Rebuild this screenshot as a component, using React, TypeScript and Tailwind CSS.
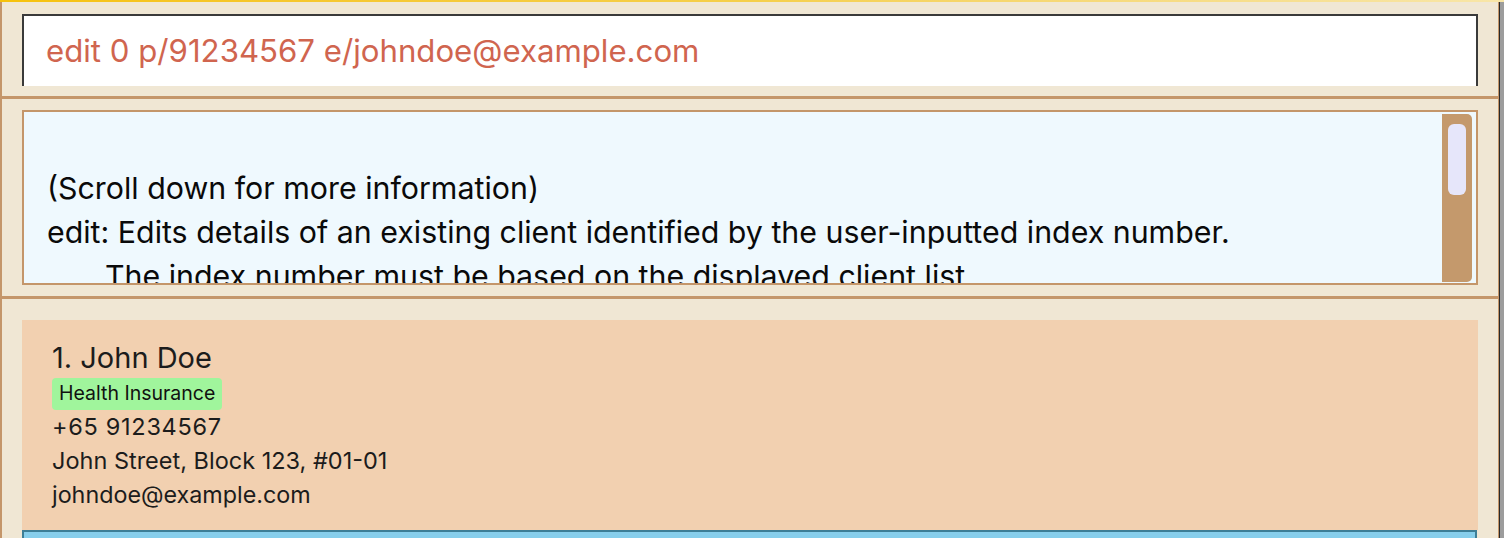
export default function App() {
  const font = { fontFamily: "Inter, 'Noto Sans', sans-serif" };

  return (
    <div className="w-[1504px] h-[538px] overflow-hidden flex flex-col bg-[#f0e7d4]" style={font}>
      {/* window title strip */}
      <div className="h-[2px] shrink-0 bg-gradient-to-r from-[#f6c20a] via-[#f5cf4a] to-[#f8e6a8]" />

      <div className="flex flex-1 min-h-0">
        <div className="w-[1499px] flex flex-col border-l-2 border-r border-[#c4966a] min-h-0">
          {/* command box */}
          <div className="h-[94px] shrink-0 px-[20px] pt-[12px] pb-[10px] flex">
            <div className="flex-1 bg-white border-t-2 border-x-2 border-[#3a3a3a] flex items-center pl-[22px]">
              <span className="text-[31.2px] text-[#d0654f]">edit 0 p/91234567 e/johndoe@example.com</span>
            </div>
          </div>

          <div className="h-[3px] shrink-0 bg-[#c4966a]" />

          {/* result display */}
          <div className="h-[197px] shrink-0 px-[20px] pt-[11px] pb-[11px] flex">
            <div className="flex-1 flex border-2 border-[#c4966a] bg-[#eff9fe] min-h-0">
              <div className="flex-1 overflow-hidden pt-[54px] pl-[23px] text-[30.35px] leading-[44px] text-[#0a0a0a] whitespace-pre">
                <div>(Scroll down for more information)</div>
                <div>edit: Edits details of an existing client identified by the user-inputted index number.</div>
                <div className="pl-[58px]">The index number must be based on the displayed client list.</div>
              </div>
              <div className="w-[30px] mt-[2px] mb-[1px] mr-[4px] bg-[#c4996c] rounded-r-[5px] pt-[10px] px-[6px]">
                <div className="h-[71px] bg-[#e6e6fa] rounded-[6px]" />
              </div>
            </div>
          </div>

          <div className="h-[3px] shrink-0 bg-[#c4966a]" />

          {/* client list */}
          <div className="flex-1 min-h-0 px-[20px] pt-[21px] flex flex-col">
            <div className="h-[210px] shrink-0 bg-[#f2d0b0] pl-[30px] pt-[18px] text-[#1c1c1c]">
              <div className="text-[29px] leading-[40px]">1. John Doe</div>
              <div className="flex">
                <span className="h-[32px] px-[7px] flex items-center bg-[#a0f59c] rounded-[4px] text-[19.5px] text-[#111]">
                  Health Insurance
                </span>
              </div>
              <div className="text-[23.5px] leading-[34px] tracking-[0.7px]">+65 91234567</div>
              <div className="text-[23.5px] leading-[34px]">John Street, Block 123, #01-01</div>
              <div className="text-[23.3px] leading-[34px]">johndoe@example.com</div>
            </div>
            <div className="h-[40px] shrink-0 bg-[#87ceeb] border-2 border-[#3d7e96] mr-[1px]" />
          </div>
        </div>
        <div className="w-[1px] bg-[#2a2a2a]" />
        <div className="flex-1 bg-[#9c9c9c]" />
      </div>
    </div>
  );
}
